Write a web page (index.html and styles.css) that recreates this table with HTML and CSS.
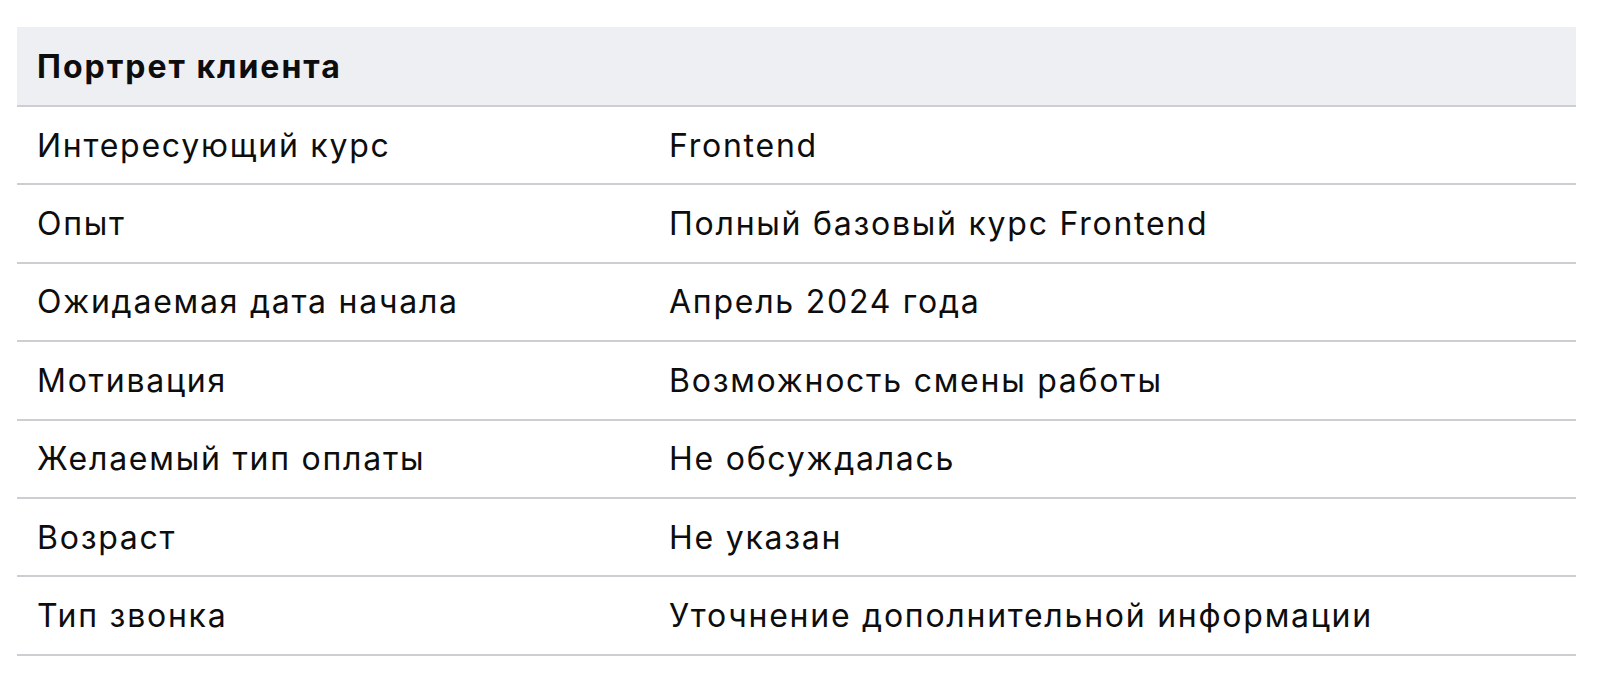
FILE: index.html
```html
<!DOCTYPE html>
<html lang="ru">
<head>
<meta charset="utf-8">
<link rel="stylesheet" href="styles.css">
</head>
<body>
<div class="table">
  <div class="head">Портрет клиента</div>
  <div class="row"><div class="key">Интересующий курс</div><div class="val">Frontend</div></div>
  <div class="row"><div class="key">Опыт</div><div class="val">Полный базовый курс Frontend</div></div>
  <div class="row"><div class="key">Ожидаемая дата начала</div><div class="val">Апрель 2024 года</div></div>
  <div class="row"><div class="key">Мотивация</div><div class="val">Возможность смены работы</div></div>
  <div class="row"><div class="key">Желаемый тип оплаты</div><div class="val">Не обсуждалась</div></div>
  <div class="row"><div class="key">Возраст</div><div class="val">Не указан</div></div>
  <div class="row"><div class="key">Тип звонка</div><div class="val">Уточнение дополнительной информации</div></div>
</div>
</body>
</html>
```
FILE: styles.css
```css
html, body {
  margin: 0;
  background: #ffffff;
}
body {
  padding: 27px 0 0 17px;
  font-family: Inter, "Noto Sans", sans-serif;
  color: #0d0d0d;
}
.table {
  width: 1559px;
  display: flex;
  flex-direction: column;
}
.head {
  background: #eeeff3;
  height: 80px;
  box-sizing: border-box;
  border-bottom: 2px solid #cdcdd2;
  display: flex;
  align-items: center;
  padding-left: 20px;
  font-size: 32px;
  font-weight: 700;
  letter-spacing: 2px;
}
.row {
  height: 78.4px;
  box-sizing: border-box;
  border-bottom: 2px solid #cdcdd2;
  display: grid;
  grid-template-columns: 632px 1fr;
  align-items: center;
  font-size: 32px;
  letter-spacing: 1.75px;
  padding-left: 20px;
}
```
